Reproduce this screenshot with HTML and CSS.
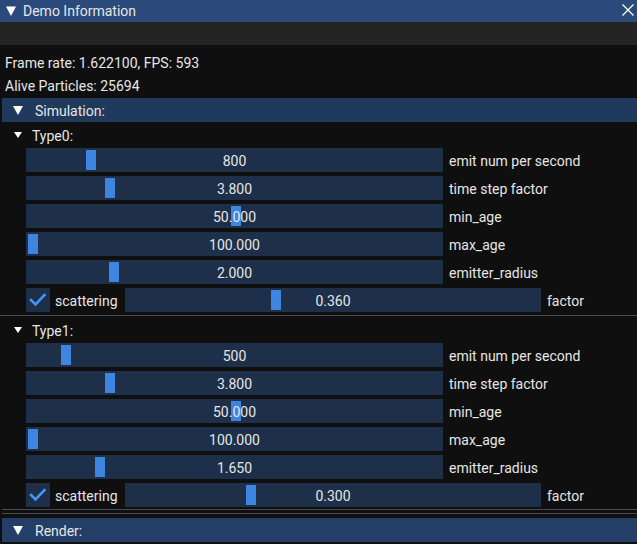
FILE: index.html
```html
<!DOCTYPE html>
<html>
<head>
<meta charset="utf-8">
<link rel="stylesheet" href="styles.css">
</head>
<body>
<div class="window">
  <div class="titlebar">
    <svg class="title-arrow" width="10" height="10" viewBox="0 0 10 10"><polygon points="0,0.5 10,0.5 5,10" fill="#fff"/></svg>
    <span class="title-text">Demo Information</span>
    <svg class="close" width="12" height="12" viewBox="0 0 12 12"><path d="M0.5 0.5 L11.5 11.5 M11.5 0.5 L0.5 11.5" stroke="#fff" stroke-width="1.3" fill="none"/></svg>
  </div>
  <div class="menubar"></div>
  <div class="content">
    <div class="line">Frame rate: 1.622100, FPS: 593</div>
    <div class="line">Alive Particles: 25694</div>

    <div class="header">
      <svg class="header-arrow" width="10" height="9" viewBox="0 0 10 9"><polygon points="0,0 10,0 5,9" fill="#fff"/></svg>
      <span class="txt">Simulation:</span>
    </div>

    <div class="tree first">
      <svg class="tree-arrow" width="8" height="6" viewBox="0 0 8 6"><polygon points="0,0 8,0 4,6" fill="#fff"/></svg>
      <span class="txt">Type0:</span>
    </div>
    <div class="row"><div class="slider"><div class="grab" style="left:60px"></div><span class="txt">800</span></div><span class="label txt">emit num per second</span></div>
    <div class="row"><div class="slider"><div class="grab" style="left:79px"></div><span class="txt">3.800</span></div><span class="label txt">time step factor</span></div>
    <div class="row"><div class="slider"><div class="grab" style="left:205px"></div><span class="txt">50.000</span></div><span class="label txt">min_age</span></div>
    <div class="row"><div class="slider"><div class="grab" style="left:2px"></div><span class="txt">100.000</span></div><span class="label txt">max_age</span></div>
    <div class="row"><div class="slider"><div class="grab" style="left:83px"></div><span class="txt">2.000</span></div><span class="label txt">emitter_radius</span></div>
    <div class="row">
      <div class="checkbox"><svg width="24" height="24" viewBox="0 0 24 24"><polyline points="5,12 9.5,16.5 18.5,7" fill="none" stroke="#4296FA" stroke-width="2.6" stroke-linecap="square"/></svg></div>
      <span class="check-label txt">scattering</span>
      <div class="slider small"><div class="grab" style="left:146px"></div><span class="txt">0.360</span></div>
      <span class="label txt">factor</span>
    </div>

    <div class="separator"></div>

    <div class="tree second">
      <svg class="tree-arrow" width="8" height="6" viewBox="0 0 8 6"><polygon points="0,0 8,0 4,6" fill="#fff"/></svg>
      <span class="txt">Type1:</span>
    </div>
    <div class="row"><div class="slider"><div class="grab" style="left:35px"></div><span class="txt">500</span></div><span class="label txt">emit num per second</span></div>
    <div class="row"><div class="slider"><div class="grab" style="left:79px"></div><span class="txt">3.800</span></div><span class="label txt">time step factor</span></div>
    <div class="row"><div class="slider"><div class="grab" style="left:205px"></div><span class="txt">50.000</span></div><span class="label txt">min_age</span></div>
    <div class="row"><div class="slider"><div class="grab" style="left:2px"></div><span class="txt">100.000</span></div><span class="label txt">max_age</span></div>
    <div class="row"><div class="slider"><div class="grab" style="left:69px"></div><span class="txt">1.650</span></div><span class="label txt">emitter_radius</span></div>
    <div class="row">
      <div class="checkbox"><svg width="24" height="24" viewBox="0 0 24 24"><polyline points="5,12 9.5,16.5 18.5,7" fill="none" stroke="#4296FA" stroke-width="2.6" stroke-linecap="square"/></svg></div>
      <span class="check-label txt">scattering</span>
      <div class="slider small"><div class="grab" style="left:121px"></div><span class="txt">0.300</span></div>
      <span class="label txt">factor</span>
    </div>

    <div class="double-sep"></div>

    <div class="header render">
      <svg class="header-arrow" width="10" height="9" viewBox="0 0 10 9"><polygon points="0,0 10,0 5,9" fill="#fff"/></svg>
      <span class="txt">Render:</span>
    </div>
  </div>
</div>
</body>
</html>
```

FILE: styles.css
```css
html, body {
  margin: 0;
  padding: 0;
  background: #0f0f0f;
}

.window {
  width: 637px;
  height: 544px;
  overflow: hidden;
  background: #0f0f0f;
  font-family: Roboto, "Noto Sans", sans-serif;
  font-size: 14px;
  color: #e6e6e6;
}

.txt {
  padding-top: 2px;
}

.titlebar {
  height: 22px;
  background: #294a7a;
  display: flex;
  align-items: center;
  position: relative;
}

.title-arrow {
  margin-left: 6px;
}

.title-text {
  margin-left: 7px;
}

.close {
  position: absolute;
  left: 622px;
  top: 4px;
}

.menubar {
  height: 23px;
  background: #242424;
}

.content {
  padding-top: 7px;
}

.line {
  height: 23px;
  line-height: 23px;
  padding-left: 5px;
}

.header {
  margin-left: 2px;
  height: 24px;
  background: #1f3a5c;
  display: flex;
  align-items: center;
}

.header.render {
  background: #233f68;
}

.header-arrow {
  margin-left: 11px;
  margin-right: 12px;
}

.tree {
  height: 26px;
  display: flex;
  align-items: center;
}

.tree.second {
  margin-top: 1px;
}

.tree-arrow {
  margin-left: 14px;
  margin-right: 10px;
}

.row {
  height: 24px;
  margin-bottom: 4px;
  display: flex;
  align-items: center;
  padding-left: 26px;
}

.slider {
  position: relative;
  width: 417px;
  height: 24px;
  background: #1d2f49;
  display: flex;
  align-items: center;
  justify-content: center;
}

.slider.small {
  width: 416px;
}

.slider span {
  position: relative;
}

.grab {
  position: absolute;
  top: 2px;
  width: 10px;
  height: 20px;
  background: #3d85e0;
}

.label {
  margin-left: 6px;
}

.checkbox {
  width: 24px;
  height: 24px;
  background: #1d2f49;
}

.checkbox svg {
  display: block;
}

.check-label {
  margin-left: 5px;
  width: 70px;
}

.separator {
  height: 1px;
  background: #4a4a52;
  margin-top: -1px;
}

.double-sep {
  height: 5px;
  margin-top: -2px;
  margin-bottom: 4px;
  border-top: 1px solid #4a4a52;
  border-bottom: 1px solid #4a4a52;
  box-sizing: border-box;
  margin-left: 2px;
}
```
